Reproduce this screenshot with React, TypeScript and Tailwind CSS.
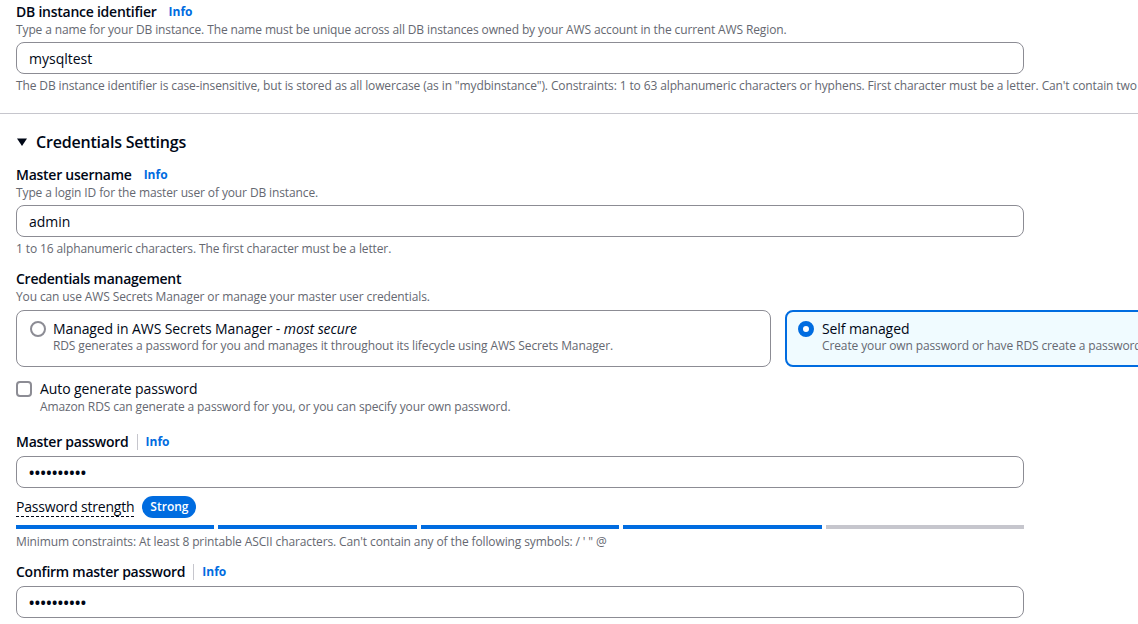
import React from 'react';

const font = { fontFamily: '"Open Sans", "Noto Sans", Arial, sans-serif' };

const Info = ({ divider }: { divider?: boolean }) => (
  <span className={`flex items-center ${divider ? 'ml-[8px] border-l border-[#c6c6cd] pl-[8px]' : 'ml-[12px]'}`}>
    <a className="text-[12px] font-bold text-[#006ce0] leading-[16px] cursor-pointer">Info</a>
  </span>
);

const Label = ({ text, divider }: { text: string; divider?: boolean }) => (
  <div className="flex items-center h-[20px]">
    <span className="text-[14px] font-semibold tracking-[-0.25px] text-[#000716] leading-[20px]">{text}</span>
    <Info divider={divider} />
  </div>
);

const Desc = ({ children }: { children: React.ReactNode }) => (
  <div className="text-[12px] tracking-[-0.12px] text-[#656871] leading-[16px] whitespace-nowrap">{children}</div>
);

const Input = ({ value, mt = 'mt-[4px]' }: { value: string; mt?: string }) => (
  <div className={`${mt} w-[1008px] h-[32px] rounded-[8px] border border-[#8c8c94] bg-white flex items-center px-[12px] text-[14px] text-[#000716]`}>
    {value}
  </div>
);

const Dots = () => (
  <span className="tracking-[0.5px] text-[14px] font-bold">••••••••••</span>
);

export default function App() {
  const bars = [true, true, true, true, false];
  return (
    <div className="w-[1138px] h-[624px] overflow-hidden bg-white" style={font}>
      <div className="w-[1600px] pl-[16px] pt-[2px]">
        <Label text="DB instance identifier" />
        <Desc>Type a name for your DB instance. The name must be unique across all DB instances owned by your AWS account in the current AWS Region.</Desc>
        <Input value="mysqltest" />
        <div className="mt-[4px]">
          <Desc>
            The DB instance identifier is case-insensitive, but is stored as all lowercase (as in "mydbinstance"). Constraints: 1 to 63 alphanumeric characters or hyphens. First character must be a letter. Can't contain two consecutive hyphens. Can't end with a hyphen.
          </Desc>
        </div>
      </div>

      <div className="mt-[19px] border-t border-[#c6c6cd] w-full" />

      <div className="w-[1600px] pl-[16px]">
        <div className="mt-[16px] flex items-center h-[24px]">
          <svg width="12" height="12" viewBox="0 0 12 12" className="mr-[8px]">
            <path d="M1 2.5 L11 2.5 L6 10 Z" fill="#000716" />
          </svg>
          <span className="text-[16px] font-semibold tracking-[-0.2px] text-[#000716] leading-[24px]">Credentials Settings</span>
        </div>

        <div className="mt-[11px]">
          <Label text="Master username" />
          <Desc>Type a login ID for the master user of your DB instance.</Desc>
          <Input value="admin" />
          <div className="mt-[4px]">
            <Desc>1 to 16 alphanumeric characters. The first character must be a letter.</Desc>
          </div>
        </div>

        <div className="mt-[12px]">
          <div className="text-[14px] font-semibold tracking-[-0.25px] text-[#000716] leading-[20px]">Credentials management</div>
          <Desc>You can use AWS Secrets Manager or manage your master user credentials.</Desc>
          <div className="mt-[5px] grid grid-cols-[755px_755px] gap-[14px]">
            <div className="h-[57px] rounded-[8px] border border-[#8c8c94] flex pl-[13px] pt-[9px]">
              <span className="mt-[1px] w-[16px] h-[16px] rounded-full border-2 border-[#8c8c94] bg-white shrink-0" />
              <div className="ml-[7px]">
                <div className="text-[14px] tracking-[-0.1px] text-[#000716] leading-[18px]">
                  Managed in AWS Secrets Manager - <i>most secure</i>
                </div>
                <Desc>RDS generates a password for you and manages it throughout its lifecycle using AWS Secrets Manager.</Desc>
              </div>
            </div>
            <div className="h-[57px] rounded-[8px] border-2 border-[#006ce0] bg-[#f0fbff] flex pl-[11px] pt-[8px]">
              <span className="mt-[1px] w-[16px] h-[16px] rounded-full border-[5px] border-[#006ce0] bg-white shrink-0" />
              <div className="ml-[8px]">
                <div className="text-[14px] tracking-[-0.1px] text-[#000716] leading-[18px]">Self managed</div>
                <Desc>Create your own password or have RDS create a password that you manage.</Desc>
              </div>
            </div>
          </div>
        </div>

        <div className="mt-[12px] flex">
          <span className="mt-[2px] w-[16px] h-[16px] rounded-[4px] border-2 border-[#8c8c94] bg-white shrink-0" />
          <div className="ml-[8px]">
            <div className="text-[14px] tracking-[-0.1px] text-[#000716] leading-[20px]">Auto generate password</div>
            <Desc>Amazon RDS can generate a password for you, or you can specify your own password.</Desc>
          </div>
        </div>

        <div className="mt-[17px]">
          <Label text="Master password" divider />
          <div className="mt-[4px] w-[1008px] h-[32px] rounded-[8px] border border-[#8c8c94] bg-white flex items-center px-[12px] text-[#000716]">
            <Dots />
          </div>
          <div className="mt-[8px] flex items-center h-[22px]">
            <span className="text-[14px] tracking-[-0.2px] text-[#000716] leading-[18px] border-b border-dashed border-[#000716]">Password strength</span>
            <span className="ml-[8px] h-[22px] px-[8px] rounded-full bg-[#006ce0] text-white text-[12px] font-semibold flex items-center">Strong</span>
          </div>
          <div className="mt-[7px] w-[1008px] flex gap-[4px]">
            {bars.map((on, i) => (
              <div key={i} className={`flex-1 h-[4px] ${on ? 'bg-[#006ce0]' : 'bg-[#c6c6cd]'}`} />
            ))}
          </div>
          <div className="mt-[5px]">
            <Desc>Minimum constraints: At least 8 printable ASCII characters. Can't contain any of the following symbols: / ' " @</Desc>
          </div>
        </div>

        <div className="mt-[12px]">
          <Label text="Confirm master password" divider />
          <div className="mt-[4px] w-[1008px] h-[32px] rounded-[8px] border border-[#8c8c94] bg-white flex items-center px-[12px] text-[#000716]">
            <Dots />
          </div>
        </div>
      </div>
    </div>
  );
}
